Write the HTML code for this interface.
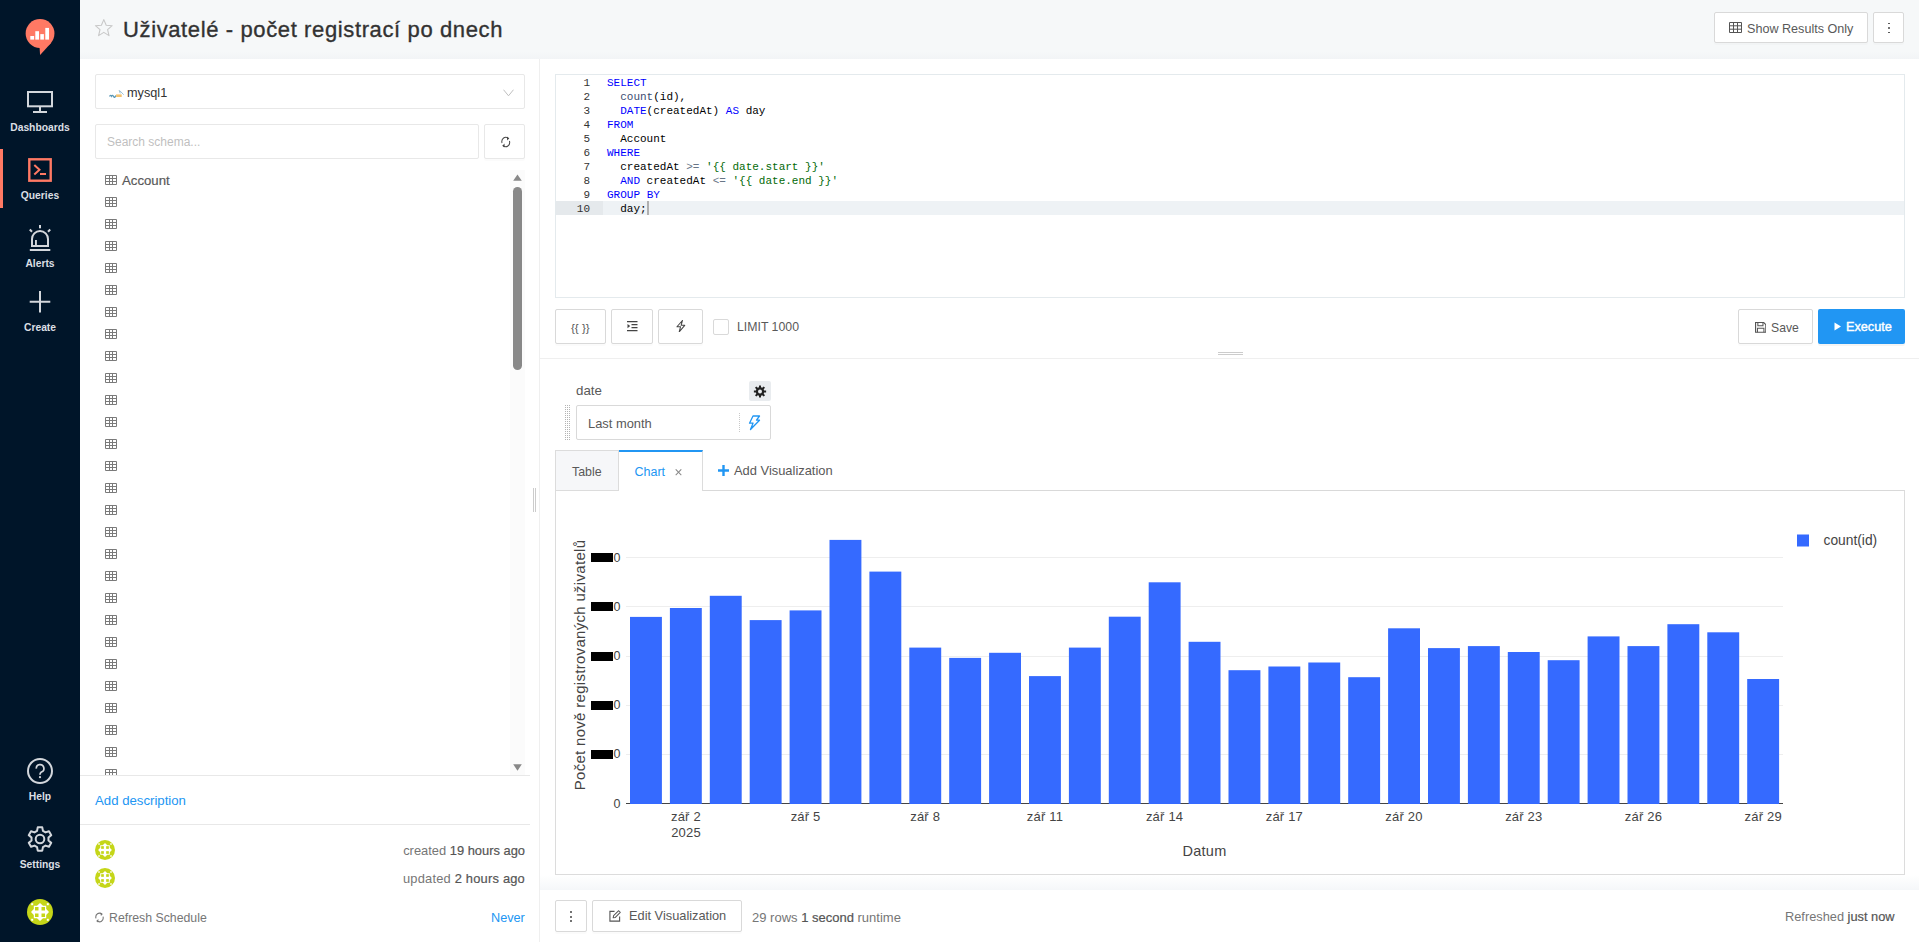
<!DOCTYPE html>
<html><head><meta charset="utf-8">
<style>
*{box-sizing:border-box;margin:0;padding:0}
html,body{width:1919px;height:942px;overflow:hidden;background:#fff;font-family:"Liberation Sans",sans-serif;color:#595959}
.a{position:absolute}
#side{left:0;top:0;width:80px;height:942px;background:#001529}
.nl{position:absolute;left:0;width:80px;text-align:center;font-weight:bold;font-size:10.3px;color:#dbdfe4;line-height:12px}
#hdr{left:80px;top:0;width:1839px;height:59px;background:linear-gradient(#f6f8f9 0,#f6f8f9 52px,#f2f4f6 59px)}
.btn{position:absolute;background:#fff;border:1px solid #d9d9d9;border-radius:2px;box-shadow:0 2px 0 rgba(0,0,0,.015)}
.tx{position:absolute;white-space:nowrap;line-height:1}
.ti{position:absolute;left:105px;width:12px;height:10px}
.cl{position:absolute;left:0;height:14px;line-height:14px;white-space:pre;width:1340px}
.ln{position:absolute;left:0;width:34px;text-align:right;color:#333}
.cd{position:absolute;left:51px}
.sb{color:#555;-webkit-text-stroke:0.2px #555}
</style></head><body>

<!-- SIDEBAR -->
<div id="side" class="a">
  <!-- logo -->
  <svg class="a" style="left:0;top:0" width="80" height="60" viewBox="0 0 80 60">
    <circle cx="40.05" cy="33.5" r="14.4" fill="#ff7964"/>
    <path d="M39.3 44 L40.1 55.1 L51.5 42.5 Z" fill="#ff7964"/>
    <rect x="30.3" y="36" width="3.8" height="3.6" fill="#fff"/>
    <rect x="35.3" y="31.2" width="3.7" height="8.4" fill="#fff"/>
    <rect x="40.3" y="34.1" width="3.6" height="5.5" fill="#fff"/>
    <rect x="45.3" y="27.9" width="3.7" height="11.7" fill="#fff"/>
  </svg>
  <!-- dashboards -->
  <svg class="a" style="left:0;top:80px" width="80" height="40" viewBox="0 80 80 40">
    <rect x="28" y="92" width="24" height="14.3" fill="none" stroke="#d3d7dc" stroke-width="2"/>
    <rect x="39" y="107" width="2" height="4.5" fill="#d3d7dc"/>
    <rect x="33" y="111" width="14" height="2" fill="#d3d7dc"/>
  </svg>
  <div class="nl" style="top:122px">Dashboards</div>
  <!-- active indicator -->
  <div class="a" style="left:0;top:149px;width:3px;height:59px;background:#ff7964"></div>
  <svg class="a" style="left:0;top:150px" width="80" height="40" viewBox="0 150 80 40">
    <rect x="29.3" y="159.3" width="21.4" height="21.4" fill="none" stroke="#ff7964" stroke-width="2.4"/>
    <path d="M34.3 165 L39.5 169.8 L34.3 174.6" fill="none" stroke="#ff7964" stroke-width="2"/>
    <rect x="40" y="173" width="6" height="2" fill="#ff7964"/>
  </svg>
  <div class="nl" style="top:190px">Queries</div>
  <!-- alerts -->
  <svg class="a" style="left:0;top:220px" width="80" height="40" viewBox="0 220 80 40">
    <path d="M32 246 L32 239 A8 8 0 0 1 48 239 L48 246 Z" fill="none" stroke="#d3d7dc" stroke-width="2"/>
    <rect x="35" y="240" width="1.9" height="5.5" fill="#d3d7dc"/>
    <rect x="29.8" y="249" width="20.5" height="2" fill="#d3d7dc"/>
    <rect x="39" y="225" width="2" height="3.3" fill="#d3d7dc"/>
    <path d="M29.8 229.5 L32 231.8 M50.2 229.5 L48 231.8" stroke="#d3d7dc" stroke-width="2"/>
  </svg>
  <div class="nl" style="top:258px">Alerts</div>
  <!-- create -->
  <svg class="a" style="left:0;top:285px" width="80" height="35" viewBox="0 285 80 35">
    <path d="M40 291 L40 312.4 M29.7 301.7 L50.3 301.7" stroke="#d3d7dc" stroke-width="2"/>
  </svg>
  <div class="nl" style="top:322px">Create</div>
  <!-- help -->
  <svg class="a" style="left:0;top:750px" width="80" height="40" viewBox="0 750 80 40">
    <circle cx="40" cy="771" r="12" fill="none" stroke="#d3d7dc" stroke-width="2"/>
    <path d="M36.3 768.6 A3.8 3.8 0 1 1 41.4 772 Q40 773 40 774.4 L40 774.8" fill="none" stroke="#d3d7dc" stroke-width="1.7"/>
    <circle cx="40" cy="777.2" r="1.1" fill="#d3d7dc"/>
  </svg>
  <div class="nl" style="top:791px">Help</div>
  <!-- settings -->
  <svg class="a" style="left:0;top:820px" width="80" height="40" viewBox="0 820 80 40">
    <path id="gear" fill="none" stroke="#d3d7dc" stroke-width="2" stroke-linejoin="round" d="M42.94 830.92 L42.27 827.32 L37.73 827.32 L37.06 830.92 L34.47 832.41 L31.02 831.19 L28.75 835.13 L31.53 837.51 L31.53 840.49 L28.75 842.87 L31.02 846.81 L34.47 845.59 L37.06 847.08 L37.73 850.68 L42.27 850.68 L42.94 847.08 L45.53 845.59 L48.98 846.81 L51.25 842.87 L48.47 840.49 L48.47 837.51 L51.25 835.13 L48.98 831.19 L45.53 832.41 Z"/>
    <circle cx="40" cy="839" r="4.3" fill="none" stroke="#d3d7dc" stroke-width="2"/>
  </svg>
  <div class="nl" style="top:859px">Settings</div>
  <!-- avatar -->
  <svg class="a" style="left:27px;top:899px" width="26" height="26" viewBox="-13 -13 26 26">
<circle cx="0" cy="0" r="13" fill="#c5d618"/>
<path d="M0 -9 L3 -6.2 L6.2 -6.2 L6.2 -3 L9 0 L6.2 3 L6.2 6.2 L3 6.2 L0 9 L-3 6.2 L-6.2 6.2 L-6.2 3 L-9 0 L-6.2 -3 L-6.2 -6.2 L-3 -6.2 Z" fill="#fff"/>
<rect x="-5" y="-5" width="3.5" height="3.5" fill="#c5d618"/><rect x="1.5" y="-5" width="3.5" height="3.5" fill="#c5d618"/>
<rect x="-5" y="1.5" width="3.5" height="3.5" fill="#c5d618"/><rect x="1.5" y="1.5" width="3.5" height="3.5" fill="#c5d618"/>
<rect x="-8.8" y="-8.8" width="2" height="2" fill="#fff"/><rect x="6.8" y="-8.8" width="2" height="2" fill="#fff"/>
<rect x="-8.8" y="6.8" width="2" height="2" fill="#fff"/><rect x="6.8" y="6.8" width="2" height="2" fill="#fff"/>
  </svg>
</div>


<!-- HEADER -->
<div id="hdr" class="a">
  <svg class="a" style="left:14px;top:18px" width="20" height="20" viewBox="0 0 20 20">
    <path d="M9.8 1.6 L12.2 7.2 L18.2 7.7 L13.6 11.6 L15 17.6 L9.8 14.4 L4.6 17.6 L6 11.6 L1.4 7.7 L7.4 7.2 Z" fill="none" stroke="#c8c8c8" stroke-width="1.1" stroke-linejoin="round"/>
  </svg>
  <div class="tx" style="left:43px;top:19px;font-size:22px;letter-spacing:0.62px;color:#323232;-webkit-text-stroke:0.35px #323232">Uživatelé - počet registrací po dnech</div>
  <div class="btn" style="left:1634px;top:12px;width:154px;height:31px">
    <svg class="a" style="left:14px;top:9px" width="13" height="11" viewBox="0 0 13 11"><path d="M0.5 0.5H12.5V10.5H0.5Z M0.5 3.8H12.5 M0.5 7.2H12.5 M4.5 0.5V10.5 M8.5 0.5V10.5" fill="none" stroke="#555" stroke-width="1"/></svg>
    <div class="tx" style="left:32px;top:9.5px;font-size:12.6px;color:#595959">Show Results Only</div>
  </div>
  <div class="btn" style="left:1793px;top:12px;width:31px;height:31px">
    <div class="a" style="left:14px;top:9.6px;width:1.9px;height:1.9px;background:#444;border-radius:1px"></div>
    <div class="a" style="left:14px;top:14.1px;width:1.9px;height:1.9px;background:#444;border-radius:1px"></div>
    <div class="a" style="left:14px;top:18.6px;width:1.9px;height:1.9px;background:#444;border-radius:1px"></div>
  </div>
</div>

<!-- LEFT PANEL -->
<div class="a" style="left:80px;top:59px;width:460px;height:883px;background:#fff;border-right:1px solid #efefef"></div>
<div class="btn" style="left:95px;top:74px;width:430px;height:35px;border-color:#e8e8e8;box-shadow:none">
  <svg class="a" style="left:13px;top:15px" width="16" height="9" viewBox="0 0 16 9">
    <path d="M0.5 6.5 Q1.5 4.3 2.6 6.3 Q3.6 4.3 4.6 6.5 Q5.6 8.6 6.8 5.6" fill="none" stroke="#5a98b6" stroke-width="1.3"/>
    <rect x="7.1" y="4.4" width="5.6" height="2.6" fill="#f2b756" opacity=".85"/>
    <path d="M10.1 0.3 L11.3 3.4 M10.5 0.4 L14.7 4.7" fill="none" stroke="#9cc2d6" stroke-width="1"/>
  </svg>
  <div class="tx" style="left:31px;top:12px;font-size:12.7px;color:#333">mysql1</div>
  <svg class="a" style="left:407px;top:14px" width="11" height="8" viewBox="0 0 11 8"><path d="M0.5 0.7 L5.5 6.8 L10.5 0.7" fill="none" stroke="#bfbfbf" stroke-width="1"/></svg>
</div>
<div class="btn" style="left:95px;top:124px;width:384px;height:35px;border-color:#e8e8e8;box-shadow:none">
  <div class="tx" style="left:11px;top:11px;font-size:12px;color:#bfbfbf">Search schema...</div>
</div>
<div class="btn" style="left:484px;top:124px;width:41px;height:35px;border-color:#e8e8e8">
  <svg class="a" style="left:16px;top:11px" width="9.5" height="12" viewBox="0 0 11 12" preserveAspectRatio="none">
    <path d="M1.2 7 A4.3 4.3 0 0 1 8.3 2.6 M9.8 5 A4.3 4.3 0 0 1 2.7 9.4" fill="none" stroke="#444" stroke-width="1.15"/>
    <path d="M6.8 0.5 L9.6 2.2 L7.2 4.4 Z M4.2 7.6 L1.4 9.8 L3.8 11.5 Z" fill="#444"/>
  </svg>
</div>
<!-- schema rows -->
<div class="a" style="left:80px;top:170px;width:460px;height:605px;overflow:hidden">
<div class="a" style="left:0;top:0;width:460px;height:605px">
<svg class="a" style="left:25px;top:5px" width="12" height="10" viewBox="0 0 12 10"><path d="M0.5 0.5H11.5V9.5H0.5Z M0.5 3.5H11.5 M0.5 6.5H11.5 M4.5 0.5V9.5 M7.5 0.5V9.5" fill="none" stroke="#7a7a7a" stroke-width="1"/></svg>
<svg class="a" style="left:25px;top:27px" width="12" height="10" viewBox="0 0 12 10"><path d="M0.5 0.5H11.5V9.5H0.5Z M0.5 3.5H11.5 M0.5 6.5H11.5 M4.5 0.5V9.5 M7.5 0.5V9.5" fill="none" stroke="#7a7a7a" stroke-width="1"/></svg>
<svg class="a" style="left:25px;top:49px" width="12" height="10" viewBox="0 0 12 10"><path d="M0.5 0.5H11.5V9.5H0.5Z M0.5 3.5H11.5 M0.5 6.5H11.5 M4.5 0.5V9.5 M7.5 0.5V9.5" fill="none" stroke="#7a7a7a" stroke-width="1"/></svg>
<svg class="a" style="left:25px;top:71px" width="12" height="10" viewBox="0 0 12 10"><path d="M0.5 0.5H11.5V9.5H0.5Z M0.5 3.5H11.5 M0.5 6.5H11.5 M4.5 0.5V9.5 M7.5 0.5V9.5" fill="none" stroke="#7a7a7a" stroke-width="1"/></svg>
<svg class="a" style="left:25px;top:93px" width="12" height="10" viewBox="0 0 12 10"><path d="M0.5 0.5H11.5V9.5H0.5Z M0.5 3.5H11.5 M0.5 6.5H11.5 M4.5 0.5V9.5 M7.5 0.5V9.5" fill="none" stroke="#7a7a7a" stroke-width="1"/></svg>
<svg class="a" style="left:25px;top:115px" width="12" height="10" viewBox="0 0 12 10"><path d="M0.5 0.5H11.5V9.5H0.5Z M0.5 3.5H11.5 M0.5 6.5H11.5 M4.5 0.5V9.5 M7.5 0.5V9.5" fill="none" stroke="#7a7a7a" stroke-width="1"/></svg>
<svg class="a" style="left:25px;top:137px" width="12" height="10" viewBox="0 0 12 10"><path d="M0.5 0.5H11.5V9.5H0.5Z M0.5 3.5H11.5 M0.5 6.5H11.5 M4.5 0.5V9.5 M7.5 0.5V9.5" fill="none" stroke="#7a7a7a" stroke-width="1"/></svg>
<svg class="a" style="left:25px;top:159px" width="12" height="10" viewBox="0 0 12 10"><path d="M0.5 0.5H11.5V9.5H0.5Z M0.5 3.5H11.5 M0.5 6.5H11.5 M4.5 0.5V9.5 M7.5 0.5V9.5" fill="none" stroke="#7a7a7a" stroke-width="1"/></svg>
<svg class="a" style="left:25px;top:181px" width="12" height="10" viewBox="0 0 12 10"><path d="M0.5 0.5H11.5V9.5H0.5Z M0.5 3.5H11.5 M0.5 6.5H11.5 M4.5 0.5V9.5 M7.5 0.5V9.5" fill="none" stroke="#7a7a7a" stroke-width="1"/></svg>
<svg class="a" style="left:25px;top:203px" width="12" height="10" viewBox="0 0 12 10"><path d="M0.5 0.5H11.5V9.5H0.5Z M0.5 3.5H11.5 M0.5 6.5H11.5 M4.5 0.5V9.5 M7.5 0.5V9.5" fill="none" stroke="#7a7a7a" stroke-width="1"/></svg>
<svg class="a" style="left:25px;top:225px" width="12" height="10" viewBox="0 0 12 10"><path d="M0.5 0.5H11.5V9.5H0.5Z M0.5 3.5H11.5 M0.5 6.5H11.5 M4.5 0.5V9.5 M7.5 0.5V9.5" fill="none" stroke="#7a7a7a" stroke-width="1"/></svg>
<svg class="a" style="left:25px;top:247px" width="12" height="10" viewBox="0 0 12 10"><path d="M0.5 0.5H11.5V9.5H0.5Z M0.5 3.5H11.5 M0.5 6.5H11.5 M4.5 0.5V9.5 M7.5 0.5V9.5" fill="none" stroke="#7a7a7a" stroke-width="1"/></svg>
<svg class="a" style="left:25px;top:269px" width="12" height="10" viewBox="0 0 12 10"><path d="M0.5 0.5H11.5V9.5H0.5Z M0.5 3.5H11.5 M0.5 6.5H11.5 M4.5 0.5V9.5 M7.5 0.5V9.5" fill="none" stroke="#7a7a7a" stroke-width="1"/></svg>
<svg class="a" style="left:25px;top:291px" width="12" height="10" viewBox="0 0 12 10"><path d="M0.5 0.5H11.5V9.5H0.5Z M0.5 3.5H11.5 M0.5 6.5H11.5 M4.5 0.5V9.5 M7.5 0.5V9.5" fill="none" stroke="#7a7a7a" stroke-width="1"/></svg>
<svg class="a" style="left:25px;top:313px" width="12" height="10" viewBox="0 0 12 10"><path d="M0.5 0.5H11.5V9.5H0.5Z M0.5 3.5H11.5 M0.5 6.5H11.5 M4.5 0.5V9.5 M7.5 0.5V9.5" fill="none" stroke="#7a7a7a" stroke-width="1"/></svg>
<svg class="a" style="left:25px;top:335px" width="12" height="10" viewBox="0 0 12 10"><path d="M0.5 0.5H11.5V9.5H0.5Z M0.5 3.5H11.5 M0.5 6.5H11.5 M4.5 0.5V9.5 M7.5 0.5V9.5" fill="none" stroke="#7a7a7a" stroke-width="1"/></svg>
<svg class="a" style="left:25px;top:357px" width="12" height="10" viewBox="0 0 12 10"><path d="M0.5 0.5H11.5V9.5H0.5Z M0.5 3.5H11.5 M0.5 6.5H11.5 M4.5 0.5V9.5 M7.5 0.5V9.5" fill="none" stroke="#7a7a7a" stroke-width="1"/></svg>
<svg class="a" style="left:25px;top:379px" width="12" height="10" viewBox="0 0 12 10"><path d="M0.5 0.5H11.5V9.5H0.5Z M0.5 3.5H11.5 M0.5 6.5H11.5 M4.5 0.5V9.5 M7.5 0.5V9.5" fill="none" stroke="#7a7a7a" stroke-width="1"/></svg>
<svg class="a" style="left:25px;top:401px" width="12" height="10" viewBox="0 0 12 10"><path d="M0.5 0.5H11.5V9.5H0.5Z M0.5 3.5H11.5 M0.5 6.5H11.5 M4.5 0.5V9.5 M7.5 0.5V9.5" fill="none" stroke="#7a7a7a" stroke-width="1"/></svg>
<svg class="a" style="left:25px;top:423px" width="12" height="10" viewBox="0 0 12 10"><path d="M0.5 0.5H11.5V9.5H0.5Z M0.5 3.5H11.5 M0.5 6.5H11.5 M4.5 0.5V9.5 M7.5 0.5V9.5" fill="none" stroke="#7a7a7a" stroke-width="1"/></svg>
<svg class="a" style="left:25px;top:445px" width="12" height="10" viewBox="0 0 12 10"><path d="M0.5 0.5H11.5V9.5H0.5Z M0.5 3.5H11.5 M0.5 6.5H11.5 M4.5 0.5V9.5 M7.5 0.5V9.5" fill="none" stroke="#7a7a7a" stroke-width="1"/></svg>
<svg class="a" style="left:25px;top:467px" width="12" height="10" viewBox="0 0 12 10"><path d="M0.5 0.5H11.5V9.5H0.5Z M0.5 3.5H11.5 M0.5 6.5H11.5 M4.5 0.5V9.5 M7.5 0.5V9.5" fill="none" stroke="#7a7a7a" stroke-width="1"/></svg>
<svg class="a" style="left:25px;top:489px" width="12" height="10" viewBox="0 0 12 10"><path d="M0.5 0.5H11.5V9.5H0.5Z M0.5 3.5H11.5 M0.5 6.5H11.5 M4.5 0.5V9.5 M7.5 0.5V9.5" fill="none" stroke="#7a7a7a" stroke-width="1"/></svg>
<svg class="a" style="left:25px;top:511px" width="12" height="10" viewBox="0 0 12 10"><path d="M0.5 0.5H11.5V9.5H0.5Z M0.5 3.5H11.5 M0.5 6.5H11.5 M4.5 0.5V9.5 M7.5 0.5V9.5" fill="none" stroke="#7a7a7a" stroke-width="1"/></svg>
<svg class="a" style="left:25px;top:533px" width="12" height="10" viewBox="0 0 12 10"><path d="M0.5 0.5H11.5V9.5H0.5Z M0.5 3.5H11.5 M0.5 6.5H11.5 M4.5 0.5V9.5 M7.5 0.5V9.5" fill="none" stroke="#7a7a7a" stroke-width="1"/></svg>
<svg class="a" style="left:25px;top:555px" width="12" height="10" viewBox="0 0 12 10"><path d="M0.5 0.5H11.5V9.5H0.5Z M0.5 3.5H11.5 M0.5 6.5H11.5 M4.5 0.5V9.5 M7.5 0.5V9.5" fill="none" stroke="#7a7a7a" stroke-width="1"/></svg>
<svg class="a" style="left:25px;top:577px" width="12" height="10" viewBox="0 0 12 10"><path d="M0.5 0.5H11.5V9.5H0.5Z M0.5 3.5H11.5 M0.5 6.5H11.5 M4.5 0.5V9.5 M7.5 0.5V9.5" fill="none" stroke="#7a7a7a" stroke-width="1"/></svg>
<svg class="a" style="left:25px;top:599px" width="12" height="10" viewBox="0 0 12 10"><path d="M0.5 0.5H11.5V9.5H0.5Z M0.5 3.5H11.5 M0.5 6.5H11.5 M4.5 0.5V9.5 M7.5 0.5V9.5" fill="none" stroke="#7a7a7a" stroke-width="1"/></svg>

<div class="tx" style="left:42px;top:4px;font-size:13.2px;color:#595959;-webkit-text-stroke:0.2px #595959">Account</div>
</div>
<div class="a" style="left:430px;top:0;width:15px;height:605px;background:#fbfbfb"></div>
<svg class="a" style="left:433px;top:4px" width="9" height="7" viewBox="0 0 9 7"><path d="M4.5 0.5 L8.8 6.8 L0.2 6.8 Z" fill="#888"/></svg>
<div class="a" style="left:433px;top:17px;width:9px;height:183px;background:#888;border-radius:4.5px"></div>
<svg class="a" style="left:433px;top:594px" width="9" height="7" viewBox="0 0 9 7"><path d="M0.2 0.2 L8.8 0.2 L4.5 6.8 Z" fill="#888"/></svg>
</div>
<div class="a" style="left:80px;top:775px;width:450px;height:1px;background:#e8e8e8"></div>
<div class="tx" style="left:95px;top:794px;font-size:13.2px;color:#2196f3">Add description</div>
<div class="a" style="left:80px;top:824px;width:450px;height:1px;background:#e8e8e8"></div>
<svg class="a" style="left:95px;top:840px" width="20" height="20" viewBox="-13 -13 26 26">
<circle cx="0" cy="0" r="13" fill="#c5d618"/>
<path d="M0 -9 L3 -6.2 L6.2 -6.2 L6.2 -3 L9 0 L6.2 3 L6.2 6.2 L3 6.2 L0 9 L-3 6.2 L-6.2 6.2 L-6.2 3 L-9 0 L-6.2 -3 L-6.2 -6.2 L-3 -6.2 Z" fill="#fff"/>
<rect x="-5" y="-5" width="3.5" height="3.5" fill="#c5d618"/><rect x="1.5" y="-5" width="3.5" height="3.5" fill="#c5d618"/>
<rect x="-5" y="1.5" width="3.5" height="3.5" fill="#c5d618"/><rect x="1.5" y="1.5" width="3.5" height="3.5" fill="#c5d618"/>
<rect x="-8.8" y="-8.8" width="2" height="2" fill="#fff"/><rect x="6.8" y="-8.8" width="2" height="2" fill="#fff"/>
<rect x="-8.8" y="6.8" width="2" height="2" fill="#fff"/><rect x="6.8" y="6.8" width="2" height="2" fill="#fff"/>
</svg><svg class="a" style="left:95px;top:868px" width="20" height="20" viewBox="-13 -13 26 26">
<circle cx="0" cy="0" r="13" fill="#c5d618"/>
<path d="M0 -9 L3 -6.2 L6.2 -6.2 L6.2 -3 L9 0 L6.2 3 L6.2 6.2 L3 6.2 L0 9 L-3 6.2 L-6.2 6.2 L-6.2 3 L-9 0 L-6.2 -3 L-6.2 -6.2 L-3 -6.2 Z" fill="#fff"/>
<rect x="-5" y="-5" width="3.5" height="3.5" fill="#c5d618"/><rect x="1.5" y="-5" width="3.5" height="3.5" fill="#c5d618"/>
<rect x="-5" y="1.5" width="3.5" height="3.5" fill="#c5d618"/><rect x="1.5" y="1.5" width="3.5" height="3.5" fill="#c5d618"/>
<rect x="-8.8" y="-8.8" width="2" height="2" fill="#fff"/><rect x="6.8" y="-8.8" width="2" height="2" fill="#fff"/>
<rect x="-8.8" y="6.8" width="2" height="2" fill="#fff"/><rect x="6.8" y="6.8" width="2" height="2" fill="#fff"/>
</svg>
<div class="tx" style="left:300px;top:845px;font-size:12.9px;color:#767676;width:225px;text-align:right">created <span class="sb">19 hours ago</span></div>
<div class="tx" style="left:300px;top:873px;font-size:12.9px;color:#767676;width:225px;text-align:right;letter-spacing:0.2px">updated <span class="sb">2 hours ago</span></div>
<svg class="a" style="left:95px;top:912px" width="9" height="11" viewBox="0 0 11 12" preserveAspectRatio="none">
    <path d="M1.2 7 A4.3 4.3 0 0 1 8.3 2.6 M9.8 5 A4.3 4.3 0 0 1 2.7 9.4" fill="none" stroke="#767676" stroke-width="1.3"/>
    <path d="M6.8 0.5 L9.6 2.2 L7.2 4.4 Z M4.2 7.6 L1.4 9.8 L3.8 11.5 Z" fill="#767676"/>
</svg>
<div class="tx" style="left:109px;top:912px;font-size:12.3px;color:#767676">Refresh Schedule</div>
<div class="tx" style="left:491px;top:912px;font-size:12.7px;color:#2196f3">Never</div>
<div class="a" style="left:533px;top:488px;width:1px;height:24px;background:#ccc"></div>
<div class="a" style="left:535px;top:488px;width:1px;height:24px;background:#ccc"></div>


<!-- RIGHT -->
<div class="a" style="left:555px;top:74px;width:1350px;height:224px;border:1px solid #e4eaed;background:#fff;overflow:hidden">
  <div class="a" style="left:0;top:126px;width:47px;height:14px;background:#e5e9ec"></div>
  <div class="a" style="left:47px;top:126px;width:1302px;height:14px;background:#eef2f5"></div>
  <div class="a" style="left:0;top:0.8px;width:1350px;height:150px;font-family:'Liberation Mono',monospace;font-size:11px;color:#000">
<div class="cl" style="top:0px"><span class="ln">1</span><span class="cd"><span style="color:#0000ff">SELECT</span></span></div>
<div class="cl" style="top:14px"><span class="ln">2</span><span class="cd">  <span style="color:#3c4c72">count</span>(id),</span></div>
<div class="cl" style="top:28px"><span class="ln">3</span><span class="cd">  <span style="color:#0000ff">DATE</span>(createdAt) <span style="color:#0000ff">AS</span> day</span></div>
<div class="cl" style="top:42px"><span class="ln">4</span><span class="cd"><span style="color:#0000ff">FROM</span></span></div>
<div class="cl" style="top:56px"><span class="ln">5</span><span class="cd">  Account</span></div>
<div class="cl" style="top:70px"><span class="ln">6</span><span class="cd"><span style="color:#0000ff">WHERE</span></span></div>
<div class="cl" style="top:84px"><span class="ln">7</span><span class="cd">  createdAt <span style="color:#687687">&gt;=</span> <span style="color:#036a07">'{{ date.start }}'</span></span></div>
<div class="cl" style="top:98px"><span class="ln">8</span><span class="cd">  <span style="color:#0000ff">AND</span> createdAt <span style="color:#687687">&lt;=</span> <span style="color:#036a07">'{{ date.end }}'</span></span></div>
<div class="cl" style="top:112px"><span class="ln">9</span><span class="cd"><span style="color:#0000ff">GROUP</span> <span style="color:#0000ff">BY</span></span></div>
<div class="cl" style="top:126px"><span class="ln">10</span><span class="cd">  day;</span></div>

  </div>
  <div class="a" style="left:91px;top:126px;width:2px;height:14px;background:#b0b0b0"></div>
</div>

<!-- TOOLBAR -->
<div class="btn" style="left:555px;top:309px;width:51px;height:35px">
  <div class="tx" style="left:15px;top:11.5px;font-size:11.6px;color:#595959">{{ }}</div>
</div>
<div class="btn" style="left:611px;top:309px;width:42px;height:35px">
  <svg class="a" style="left:15px;top:11px" width="11" height="11" viewBox="0 0 11 11">
    <path d="M0 0.6H10.5 M4.5 3.6H10.5 M4.5 6.6H10.5 M0 9.6H10.5" stroke="#444" stroke-width="1.2"/>
    <path d="M0.5 3 L3.2 5.1 L0.5 7.2 Z" fill="#444"/>
  </svg>
</div>
<div class="btn" style="left:658px;top:309px;width:45px;height:35px">
  <svg class="a" style="left:17px;top:9.5px" width="9.5" height="12.5" viewBox="0 0 10 13" preserveAspectRatio="none">
    <path d="M6.8 0.5 L1 7 L4.8 7 L3.4 12.3 L9.2 5.5 L5.4 5.5 Z" fill="none" stroke="#444" stroke-width="1.1" stroke-linejoin="round"/>
  </svg>
</div>
<div class="a" style="left:713px;top:319px;width:16px;height:16px;border:1px solid #d9d9d9;border-radius:2px;background:#fff"></div>
<div class="tx" style="left:737px;top:321px;font-size:12.3px;color:#595959">LIMIT 1000</div>
<div class="btn" style="left:1738px;top:309px;width:75px;height:35px">
  <svg class="a" style="left:16px;top:12px" width="11.4" height="10.8" viewBox="0 0 12 12" preserveAspectRatio="none">
    <path d="M0.6 0.6H9.2L11.4 2.8V11.4H0.6Z" fill="none" stroke="#555" stroke-width="1.2"/>
    <path d="M3 0.6V4.2H8.4V0.6 M2.6 11.4V7H9.4V11.4" fill="none" stroke="#555" stroke-width="1.1"/>
  </svg>
  <div class="tx" style="left:32px;top:11.5px;font-size:12.2px;color:#595959">Save</div>
</div>
<div class="a" style="left:1818px;top:309px;width:87px;height:35px;background:#2196f3;border-radius:2px;box-shadow:0 2px 0 rgba(0,0,0,.045)">
  <svg class="a" style="left:16px;top:13px" width="8" height="9" viewBox="0 0 8 9"><path d="M0.5 0.5 L7 4.5 L0.5 8.5 Z" fill="#fff"/></svg>
  <div class="tx" style="left:28px;top:11.5px;font-size:12.7px;color:#fff;-webkit-text-stroke:0.4px #fff">Execute</div>
</div>
<div class="a" style="left:540px;top:358px;width:1379px;height:1px;background:#efefef"></div>
<div class="a" style="left:1218px;top:352px;width:25px;height:1px;background:#ccc"></div>
<div class="a" style="left:1218px;top:354px;width:25px;height:1px;background:#ccc"></div>

<!-- PARAMS -->
<div class="tx" style="left:576px;top:384px;font-size:13.3px;color:#595959">date</div>
<div class="a" style="left:749px;top:381px;width:22px;height:20px;background:#e9ecef;border-radius:2px">
  <svg class="a" style="left:4px;top:4px" width="14" height="13" viewBox="-7 -6.5 14 13">
    <path d="M1.04 -4.17 L0.97 -6.12 L-0.97 -6.12 L-1.04 -4.17 L-2.21 -3.69 L-3.64 -5.02 L-5.02 -3.64 L-3.69 -2.21 L-4.17 -1.04 L-6.12 -0.97 L-6.12 0.97 L-4.17 1.04 L-3.69 2.21 L-5.02 3.64 L-3.64 5.02 L-2.21 3.69 L-1.04 4.17 L-0.97 6.12 L0.97 6.12 L1.04 4.17 L2.21 3.69 L3.64 5.02 L5.02 3.64 L3.69 2.21 L4.17 1.04 L6.12 0.97 L6.12 -0.97 L4.17 -1.04 L3.69 -2.21 L5.02 -3.64 L3.64 -5.02 L2.21 -3.69 Z" fill="#222"/>
    <circle cx="0" cy="0" r="2" fill="#e9ecef"/>
  </svg>
</div>
<svg class="a" style="left:565px;top:405px" width="5" height="35" viewBox="0 0 5 35" fill="#b4b4b4"><rect x="0" y="0" width="1" height="1"/><rect x="0" y="2" width="1" height="1"/><rect x="0" y="4" width="1" height="1"/><rect x="0" y="6" width="1" height="1"/><rect x="0" y="8" width="1" height="1"/><rect x="0" y="10" width="1" height="1"/><rect x="0" y="12" width="1" height="1"/><rect x="0" y="14" width="1" height="1"/><rect x="0" y="16" width="1" height="1"/><rect x="0" y="18" width="1" height="1"/><rect x="0" y="20" width="1" height="1"/><rect x="0" y="22" width="1" height="1"/><rect x="0" y="24" width="1" height="1"/><rect x="0" y="26" width="1" height="1"/><rect x="0" y="28" width="1" height="1"/><rect x="0" y="30" width="1" height="1"/><rect x="0" y="32" width="1" height="1"/><rect x="0" y="34" width="1" height="1"/><rect x="2" y="0" width="1" height="1"/><rect x="2" y="2" width="1" height="1"/><rect x="2" y="4" width="1" height="1"/><rect x="2" y="6" width="1" height="1"/><rect x="2" y="8" width="1" height="1"/><rect x="2" y="10" width="1" height="1"/><rect x="2" y="12" width="1" height="1"/><rect x="2" y="14" width="1" height="1"/><rect x="2" y="16" width="1" height="1"/><rect x="2" y="18" width="1" height="1"/><rect x="2" y="20" width="1" height="1"/><rect x="2" y="22" width="1" height="1"/><rect x="2" y="24" width="1" height="1"/><rect x="2" y="26" width="1" height="1"/><rect x="2" y="28" width="1" height="1"/><rect x="2" y="30" width="1" height="1"/><rect x="2" y="32" width="1" height="1"/><rect x="2" y="34" width="1" height="1"/><rect x="4" y="0" width="1" height="1"/><rect x="4" y="2" width="1" height="1"/><rect x="4" y="4" width="1" height="1"/><rect x="4" y="6" width="1" height="1"/><rect x="4" y="8" width="1" height="1"/><rect x="4" y="10" width="1" height="1"/><rect x="4" y="12" width="1" height="1"/><rect x="4" y="14" width="1" height="1"/><rect x="4" y="16" width="1" height="1"/><rect x="4" y="18" width="1" height="1"/><rect x="4" y="20" width="1" height="1"/><rect x="4" y="22" width="1" height="1"/><rect x="4" y="24" width="1" height="1"/><rect x="4" y="26" width="1" height="1"/><rect x="4" y="28" width="1" height="1"/><rect x="4" y="30" width="1" height="1"/><rect x="4" y="32" width="1" height="1"/><rect x="4" y="34" width="1" height="1"/></svg>
<div class="a" style="left:576px;top:405px;width:195px;height:35px;border:1px solid #d9d9d9;border-radius:2px;background:#fff">
  <div class="tx" style="left:11px;top:12px;font-size:12.9px;color:#595959">Last month</div>
  <div class="a" style="left:162px;top:7px;width:1px;height:20px;background-image:linear-gradient(#c8c8c8 50%,transparent 50%);background-size:1px 2px"></div>
  <svg class="a" style="left:171px;top:9px" width="13" height="16" viewBox="0 0 13 16">
    <path d="M5 1 L11.5 1 L8.5 5.2 L11.5 5.2 L2.5 14.5 L5 8.2 L1.5 8.2 Z" fill="none" stroke="#2196f3" stroke-width="1.3" stroke-linejoin="round"/>
  </svg>
</div>

<!-- TABS -->
<div class="a" style="left:555px;top:490px;width:1350px;height:385px;border:1px solid #dcdcdc;border-top:1px solid #d9d9d9;background:#fff"></div>
<div class="a" style="left:555px;top:450px;width:64px;height:41px;background:#f6f7f9;border:1px solid #dcdcdc"></div>
<div class="a" style="left:619px;top:450px;width:84px;height:41px;background:#fff;border-right:1px solid #dcdcdc;border-top:2px solid #2196f3"></div>
<div class="tx" style="left:572px;top:466px;font-size:12.4px;color:#595959">Table</div>
<div class="tx" style="left:634.5px;top:466px;font-size:12.5px;color:#2196f3">Chart</div>
<svg class="a" style="left:674.5px;top:469px" width="7" height="6.5" viewBox="0 0 8 7" preserveAspectRatio="none"><path d="M0.8 0.3 L7.2 6.7 M7.2 0.3 L0.8 6.7" stroke="#888" stroke-width="1.1"/></svg>
<svg class="a" style="left:718px;top:465px" width="11" height="11" viewBox="0 0 11 11"><path d="M5.5 0 V11 M0 5.5 H11" stroke="#2196f3" stroke-width="2.4"/></svg>
<div class="tx" style="left:734px;top:465px;font-size:12.9px;color:#595959">Add Visualization</div>


<!-- CHART -->
<svg class="a" style="left:556px;top:491px" width="1348" height="383" viewBox="556 491 1348 383">
<line x1="626" x2="1783" y1="754.5" y2="754.5" stroke="#eeeeee" stroke-width="1"/>
<line x1="626" x2="1783" y1="705.5" y2="705.5" stroke="#eeeeee" stroke-width="1"/>
<line x1="626" x2="1783" y1="656.5" y2="656.5" stroke="#eeeeee" stroke-width="1"/>
<line x1="626" x2="1783" y1="606.5" y2="606.5" stroke="#eeeeee" stroke-width="1"/>
<line x1="626" x2="1783" y1="557.5" y2="557.5" stroke="#eeeeee" stroke-width="1"/>
<line x1="626" x2="1783" y1="803.5" y2="803.5" stroke="#444" stroke-width="1"/>
<rect x="630.00" y="616.9" width="31.9" height="187.1" fill="#356aff"/>
<rect x="669.90" y="608.0" width="31.9" height="196.0" fill="#356aff"/>
<rect x="709.80" y="595.8" width="31.9" height="208.2" fill="#356aff"/>
<rect x="749.70" y="620.1" width="31.9" height="183.9" fill="#356aff"/>
<rect x="789.60" y="610.4" width="31.9" height="193.6" fill="#356aff"/>
<rect x="829.50" y="539.9" width="31.9" height="264.1" fill="#356aff"/>
<rect x="869.40" y="571.6" width="31.9" height="232.4" fill="#356aff"/>
<rect x="909.30" y="647.6" width="31.9" height="156.4" fill="#356aff"/>
<rect x="949.20" y="657.9" width="31.9" height="146.1" fill="#356aff"/>
<rect x="989.10" y="652.8" width="31.9" height="151.2" fill="#356aff"/>
<rect x="1029.00" y="676.1" width="31.9" height="127.9" fill="#356aff"/>
<rect x="1068.90" y="647.6" width="31.9" height="156.4" fill="#356aff"/>
<rect x="1108.80" y="616.7" width="31.9" height="187.3" fill="#356aff"/>
<rect x="1148.70" y="582.3" width="31.9" height="221.7" fill="#356aff"/>
<rect x="1188.60" y="641.8" width="31.9" height="162.2" fill="#356aff"/>
<rect x="1228.50" y="670.2" width="31.9" height="133.8" fill="#356aff"/>
<rect x="1268.40" y="666.5" width="31.9" height="137.5" fill="#356aff"/>
<rect x="1308.30" y="662.5" width="31.9" height="141.5" fill="#356aff"/>
<rect x="1348.20" y="677.2" width="31.9" height="126.8" fill="#356aff"/>
<rect x="1388.10" y="628.3" width="31.9" height="175.7" fill="#356aff"/>
<rect x="1428.00" y="648.1" width="31.9" height="155.9" fill="#356aff"/>
<rect x="1467.90" y="646.1" width="31.9" height="157.9" fill="#356aff"/>
<rect x="1507.80" y="652.0" width="31.9" height="152.0" fill="#356aff"/>
<rect x="1547.70" y="660.2" width="31.9" height="143.8" fill="#356aff"/>
<rect x="1587.60" y="636.4" width="31.9" height="167.6" fill="#356aff"/>
<rect x="1627.50" y="646.1" width="31.9" height="157.9" fill="#356aff"/>
<rect x="1667.40" y="624.2" width="31.9" height="179.8" fill="#356aff"/>
<rect x="1707.30" y="632.3" width="31.9" height="171.7" fill="#356aff"/>
<rect x="1747.20" y="679.0" width="31.9" height="125.0" fill="#356aff"/>
<rect x="591" y="750" width="22" height="9" fill="#000"/>
<text x="620.5" y="758.3" text-anchor="end" font-size="12.5" fill="#444">0</text>
<rect x="591" y="701" width="22" height="9" fill="#000"/>
<text x="620.5" y="709.1" text-anchor="end" font-size="12.5" fill="#444">0</text>
<rect x="591" y="652" width="22" height="9" fill="#000"/>
<text x="620.5" y="659.9" text-anchor="end" font-size="12.5" fill="#444">0</text>
<rect x="591" y="602" width="22" height="9" fill="#000"/>
<text x="620.5" y="610.7" text-anchor="end" font-size="12.5" fill="#444">0</text>
<rect x="591" y="553" width="22" height="9" fill="#000"/>
<text x="620.5" y="561.5" text-anchor="end" font-size="12.5" fill="#444">0</text>
<text x="620.5" y="807.8" text-anchor="end" font-size="12.5" fill="#444">0</text>
<text x="685.9" y="821" text-anchor="middle" font-size="13" letter-spacing="0.2" fill="#444">zář 2</text>
<text x="805.6" y="821" text-anchor="middle" font-size="13" letter-spacing="0.2" fill="#444">zář 5</text>
<text x="925.2" y="821" text-anchor="middle" font-size="13" letter-spacing="0.2" fill="#444">zář 8</text>
<text x="1045.0" y="821" text-anchor="middle" font-size="13" letter-spacing="0.2" fill="#444">zář 11</text>
<text x="1164.6" y="821" text-anchor="middle" font-size="13" letter-spacing="0.2" fill="#444">zář 14</text>
<text x="1284.4" y="821" text-anchor="middle" font-size="13" letter-spacing="0.2" fill="#444">zář 17</text>
<text x="1404.0" y="821" text-anchor="middle" font-size="13" letter-spacing="0.2" fill="#444">zář 20</text>
<text x="1523.8" y="821" text-anchor="middle" font-size="13" letter-spacing="0.2" fill="#444">zář 23</text>
<text x="1643.5" y="821" text-anchor="middle" font-size="13" letter-spacing="0.2" fill="#444">zář 26</text>
<text x="1763.2" y="821" text-anchor="middle" font-size="13" letter-spacing="0.2" fill="#444">zář 29</text>
<text x="686" y="837" text-anchor="middle" font-size="13" letter-spacing="0.2" fill="#444">2025</text>
<text x="1204.5" y="856.3" text-anchor="middle" font-size="14.5" letter-spacing="0.3" fill="#444">Datum</text>
<text transform="translate(585.3 665) rotate(-90)" x="0" y="0" text-anchor="middle" font-size="15" letter-spacing="0.3" fill="#444">Počet nově registrovaných uživatelů</text>
<rect x="1797" y="534.5" width="12" height="12" fill="#356aff"/>
<text x="1823.5" y="545" font-size="13.8" fill="#444">count(id)</text>
</svg>
<!-- BOTTOM -->
<div class="a" style="left:540px;top:875px;width:1379px;height:15px;background:linear-gradient(#fff,#f5f7f9)"></div>
<div class="btn" style="left:555px;top:900px;width:32px;height:32px">
  <div class="a" style="left:13.6px;top:10.2px;width:2px;height:2px;background:#444;border-radius:1px"></div>
  <div class="a" style="left:13.6px;top:14.6px;width:2px;height:2px;background:#444;border-radius:1px"></div>
  <div class="a" style="left:13.6px;top:19px;width:2px;height:2px;background:#444;border-radius:1px"></div>
</div>
<div class="btn" style="left:592px;top:900px;width:150px;height:32px">
  <svg class="a" style="left:16px;top:8.5px" width="12" height="12" viewBox="0 0 13 13">
    <path d="M6 1.5 H1 V12 H11.5 V7" fill="none" stroke="#555" stroke-width="1.2"/>
    <path d="M4.5 8.5 L5 6 L10.5 0.8 L12.2 2.5 L6.9 8 Z" fill="none" stroke="#555" stroke-width="1.1" stroke-linejoin="round"/>
  </svg>
  <div class="tx" style="left:36px;top:9px;font-size:12.8px;color:#595959">Edit Visualization</div>
</div>
<div class="tx" style="left:752px;top:911px;font-size:13px;color:#767676">29 rows <span class="sb">1 second</span> runtime</div>
<div class="tx" style="left:1785px;top:911px;font-size:12.8px;color:#767676">Refreshed <span class="sb">just now</span></div>
</body></html>
